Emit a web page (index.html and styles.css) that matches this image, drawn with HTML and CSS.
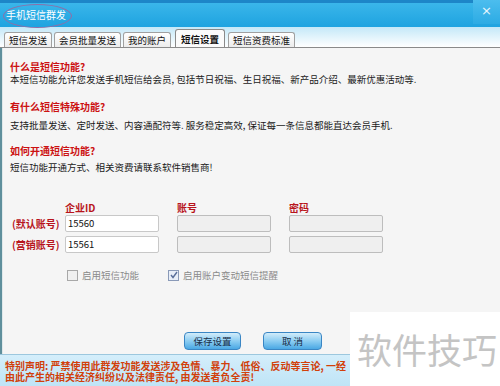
FILE: index.html
```html
<!DOCTYPE html>
<html lang="zh-CN">
<head>
    <meta charset="UTF-8">
    <title>手机短信群发</title>
    <link rel="stylesheet" href="styles.css">
</head>
<body>
    <div class="window">
        <div class="titlebar">
            <span class="title">手机短信群发</span>
            <span class="mark"></span>
            <span class="close">×</span>
        </div>
        <div class="tabs">
            <span class="tab">短信发送</span>
            <span class="tab">会员批量发送</span>
            <span class="tab">我的账户</span>
            <span class="tab active">短信设置</span>
            <span class="tab">短信资费标准</span>
        </div>
        <div class="panel">
            <h3 class="q q1">什么是短信功能?</h3>
            <p class="a a1">本短信功能允许您发送手机短信给会员, 包括节日祝福、生日祝福、新产品介绍、最新优惠活动等.</p>
            <h3 class="q q2">有什么短信特殊功能?</h3>
            <p class="a a2">支持批量发送、定时发送、内容通配符等. 服务稳定高效, 保证每一条信息都能直达会员手机.</p>
            <h3 class="q q3">如何开通短信功能?</h3>
            <p class="a a3">短信功能开通方式、相关资费请联系软件销售商!</p>

            <div class="form">
                <div class="row head">
                    <span class="lbl"></span>
                    <span class="col">企业ID</span>
                    <span class="col">账号</span>
                    <span class="col">密码</span>
                </div>
                <div class="row">
                    <span class="lbl">(默认账号)</span>
                    <span class="field">15560</span>
                    <span class="field off"></span>
                    <span class="field off"></span>
                </div>
                <div class="row">
                    <span class="lbl">(营销账号)</span>
                    <span class="field">15561</span>
                    <span class="field off"></span>
                    <span class="field off"></span>
                </div>
                <div class="checks">
                    <span class="check"><span class="box"></span>启用短信功能</span>
                    <span class="check"><span class="box on"><svg width="8" height="8" viewBox="0 0 8 8"><path d="M1 4 L3 6.5 L7 1" fill="none" stroke="#5a6f9a" stroke-width="1.4"/></svg></span>启用账户变动短信提醒</span>
                </div>
            </div>

            <div class="buttons">
                <span class="btn">保存设置</span>
                <span class="btn">取 消</span>
            </div>
        </div>
        <div class="notice">
            <div class="line">特别声明: 严禁使用此群发功能发送涉及色情、暴力、低俗、反动等言论, 一经</div>
            <div class="line">由此产生的相关经济纠纷以及法律责任, 由发送者负全责!</div>
        </div>
    </div>
    <div class="watermark">软件技巧</div>
</body>
</html>
```

FILE: styles.css
```css
body {
    margin: 0;
    width: 500px;
    height: 386px;
    overflow: hidden;
    font-family: "Noto Sans CJK SC", "DejaVu Sans", sans-serif;
    font-size: 9.5px;
    color: #222;
    background: #f5f5f5;
}
.window {
    display: flex;
    flex-direction: column;
    height: 386px;
}
.titlebar {
    position: relative;
    height: 27px;
    box-sizing: border-box;
    border-top: 3px solid #1d86c8;
    background: linear-gradient(#3ab6ea, #1ea3e0);
    display: flex;
    align-items: center;
    padding-left: 6px;
}
.title {
    color: #fff;
    font-size: 10px;
    margin-top: -2px;
}
.mark {
    position: absolute;
    left: 3px;
    top: 1px;
    width: 67px;
    height: 22px;
    border: 1px solid #8e6fa8;
    border-radius: 50%;
}
.close {
    position: absolute;
    right: 0;
    top: -3px;
    width: 27px;
    height: 24px;
    line-height: 22px;
    text-align: center;
    color: #e8f6fd;
    font-size: 13px;
    font-family: "DejaVu Sans", sans-serif;
    background: linear-gradient(#4cbdee, #2cabe4);
}
.tabs {
    height: 21px;
    box-sizing: border-box;
    background: linear-gradient(#c4e8f8, #ffffff);
    border-bottom: 1px solid #8a8a8a;
    display: flex;
    align-items: flex-end;
    padding-left: 4px;
    gap: 2px;
}
.tab {
    height: 14px;
    line-height: 14px;
    padding: 0 4px;
    border: 1px solid #a0a0a0;
    border-bottom: none;
    border-radius: 3px 3px 0 0;
    background: linear-gradient(#ffffff, #ececec);
    color: #111;
}
.tab.active {
    height: 17px;
    line-height: 18px;
    padding: 0 5px;
    font-weight: bold;
    background: #fbfbfb;
    margin: 0 1px 0 2px;
    border-color: #8a8a8a;
}
.panel {
    flex: 1;
    border-left: 2px solid #5f8f9c;
    box-shadow: inset 1px 0 0 #dfe8ea;
    padding: 12px 0 0 8px;
    background: #f5f5f5;
}
.q {
    margin: 0;
    font-size: 10px;
    line-height: 13px;
    color: #cc1111;
    font-weight: bold;
}
.a {
    margin: 0;
    line-height: 13px;
    color: #1a1a1a;
}
.a1 { margin-top: 0; }
.q2 { margin-top: 14px; }
.a2 { margin-top: 6px; }
.q3 { margin-top: 12px; }
.a3 { margin-top: 4px; }
.form {
    margin-top: 27px;
}
.row {
    display: flex;
    align-items: center;
    gap: 18px;
    margin-bottom: 4px;
}
.row.head {
    margin-bottom: 1px;
}
.lbl {
    width: 53px;
    margin-left: 2px;
    margin-right: -18px;
    color: #b8141c;
    font-weight: bold;
    font-size: 10px;
}
.col {
    width: 94px;
    color: #b8141c;
    font-weight: bold;
    font-size: 10px;
    line-height: 13px;
}
.field {
    width: 94px;
    height: 17px;
    box-sizing: border-box;
    border: 1px solid #c8c8c8;
    border-radius: 2px;
    background: #fff;
    padding-left: 2px;
    line-height: 15px;
    color: #111;
}
.field.off {
    background: #efefef;
    border-color: #bdbdbd;
}
.checks {
    display: flex;
    gap: 29px;
    margin: 15px 0 0 57px;
    color: #8a8a8a;
}
.check {
    display: flex;
    align-items: center;
    gap: 4px;
}
.box {
    width: 9px;
    height: 9px;
    border: 1px solid #a8a8a8;
    background: #f0f0f0;
    display: flex;
    align-items: center;
    justify-content: center;
}
.box.on {
    background: #e8eef8;
    border-color: #8a9ab8;
}
.buttons {
    display: flex;
    justify-content: center;
    gap: 22px;
    margin-top: 50px;
    padding-right: 4px;
}
.btn {
    width: 57px;
    height: 18px;
    box-sizing: border-box;
    border: 1px solid #3a86c4;
    border-radius: 4px;
    background: linear-gradient(#d2ecfa, #8ccdf2 50%, #4aa8e4);
    text-align: center;
    line-height: 16px;
    color: #1a2f48;
}
.btn + .btn {
    width: 59px;
}
.notice {
    height: 32px;
    box-sizing: border-box;
    border-top: 1px solid #9cc7de;
    background: linear-gradient(#d4eefb, #bfe4f6);
    padding: 5px 0 0 5px;
    overflow: hidden;
}
.line {
    white-space: nowrap;
    font-size: 10px;
    font-weight: bold;
    line-height: 11px;
    color: #d2400a;
}
.watermark {
    position: absolute;
    left: 350px;
    top: 312px;
    width: 150px;
    height: 74px;
    background: #fff;
    color: #c4c4c4;
    font-size: 35px;
    line-height: 74px;
    text-indent: 7px;
}
```
